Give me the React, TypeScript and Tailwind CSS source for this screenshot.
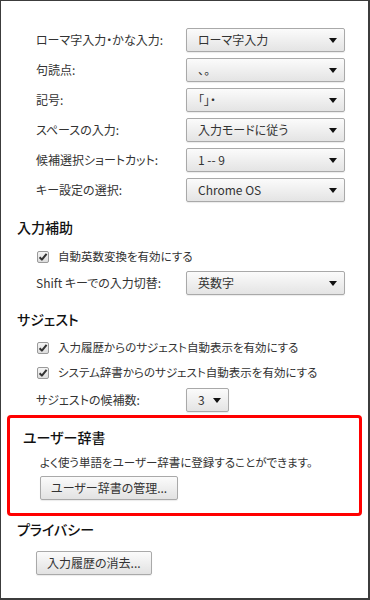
import React from 'react';

const font = { fontFamily: '"Noto Sans CJK JP", "Noto Sans", sans-serif' };

function Arrow() {
  return (
    <svg width="8" height="5" viewBox="0 0 8 5" className="shrink-0">
      <path d="M0 0 H8 L4 5 Z" fill="#111" />
    </svg>
  );
}

function Select({ value, wide = true }: { value: string; wide?: boolean }) {
  return (
    <div
      className={`${wide ? 'w-[159px]' : 'w-[43px]'} h-[24px] flex items-center justify-between pl-[11px] pr-[7px] border border-[#a9a9a9] rounded-[2px] bg-gradient-to-b from-[#fbfbfb] to-[#e4e4e4] shadow-[0_1px_1px_rgba(0,0,0,0.08)] text-[12px] text-[#333]`}
    >
      <span>{value}</span>
      <Arrow />
    </div>
  );
}

function Row({ label, value }: { label: string; value: string }) {
  return (
    <div className="flex items-center h-[24px] pl-[35px]">
      <div className="w-[150px] text-[12px] text-[#333]">{label}</div>
      <Select value={value} />
    </div>
  );
}

function Check({ label }: { label: string }) {
  return (
    <div className="flex items-center h-[20px] pl-[36px] gap-[9px]">
      <svg width="12" height="12" viewBox="0 0 12 12" className="shrink-0">
        <defs>
          <linearGradient id="cbg" x1="0" y1="0" x2="0" y2="1">
            <stop offset="0" stopColor="#f6f6f6" />
            <stop offset="1" stopColor="#dcdcdc" />
          </linearGradient>
        </defs>
        <rect x="0.5" y="0.5" width="11" height="11" rx="1.5" fill="url(#cbg)" stroke="#9a9a9a" />
        <path d="M2.6 6.2 L4.9 8.6 L9.6 2.8" fill="none" stroke="#333" strokeWidth="2" strokeLinejoin="round" />
      </svg>
      <span className="text-[11.5px] text-[#333]">{label}</span>
    </div>
  );
}

function Button({ children }: { children: React.ReactNode }) {
  return (
    <div className="inline-flex items-center h-[24px] px-[10px] border border-[#a9a9a9] rounded-[2px] bg-gradient-to-b from-[#fbfbfb] to-[#e2e2e2] shadow-[0_1px_1px_rgba(0,0,0,0.08)] text-[12px] text-[#333]">
      {children}
    </div>
  );
}

function Heading({ children }: { children: React.ReactNode }) {
  return <div className="h-[20px] flex items-center text-[14px] font-medium text-[#111]">{children}</div>;
}

export default function App() {
  return (
    <div
      style={font}
      className="w-[370px] h-[600px] bg-white border border-[#3c3c3c] border-r-2 border-b-2 flex flex-col [font-feature-settings:'palt']"
    >
      <div className="flex flex-col gap-[6px] mt-[27px]">
        <Row label="ローマ字入力・かな入力:" value="ローマ字入力" />
        <Row label="句読点:" value="、。" />
        <Row label="記号:" value="「」・" />
        <Row label="スペースの入力:" value="入力モードに従う" />
        <Row label="候補選択ショートカット:" value="1 -- 9" />
        <Row label="キー設定の選択:" value="Chrome OS" />
      </div>

      <div className="pl-[16px] mt-[15px]">
        <Heading>入力補助</Heading>
      </div>
      <div className="mt-[10px]">
        <Check label="自動英数変換を有効にする" />
      </div>
      <div className="mt-[4px]">
        <Row label="Shift キーでの入力切替:" value="英数字" />
      </div>

      <div className="pl-[16px] mt-[14px]">
        <Heading>サジェスト</Heading>
      </div>
      <div className="mt-[9px] flex flex-col gap-[5px]">
        <Check label="入力履歴からのサジェスト自動表示を有効にする" />
        <Check label="システム辞書からのサジェスト自動表示を有効にする" />
      </div>
      <div className="flex items-center h-[24px] pl-[35px] mt-[5px]">
        <div className="w-[150px] text-[12px] text-[#333]">サジェストの候補数:</div>
        <Select value="3" wide={false} />
      </div>

      <div className="ml-[6px] mr-[6px] mt-[3px] h-[101px] border-[3px] border-[#ff0000] rounded-[4px] pl-[13px] flex flex-col">
        <div className="mt-[9px]">
          <Heading>ユーザー辞書</Heading>
        </div>
        <div className="mt-[8px] pl-[17px] text-[11.5px] text-[#333] h-[16px] flex items-center">
          よく使う単語をユーザー辞書に登録することができます。
        </div>
        <div className="mt-[3px] pl-[17px]">
          <Button>ユーザー辞書の管理...</Button>
        </div>
      </div>

      <div className="pl-[16px] mt-[3px]">
        <Heading>プライバシー</Heading>
      </div>
      <div className="pl-[35px] mt-[10px]">
        <Button>入力履歴の消去...</Button>
      </div>
    </div>
  );
}
